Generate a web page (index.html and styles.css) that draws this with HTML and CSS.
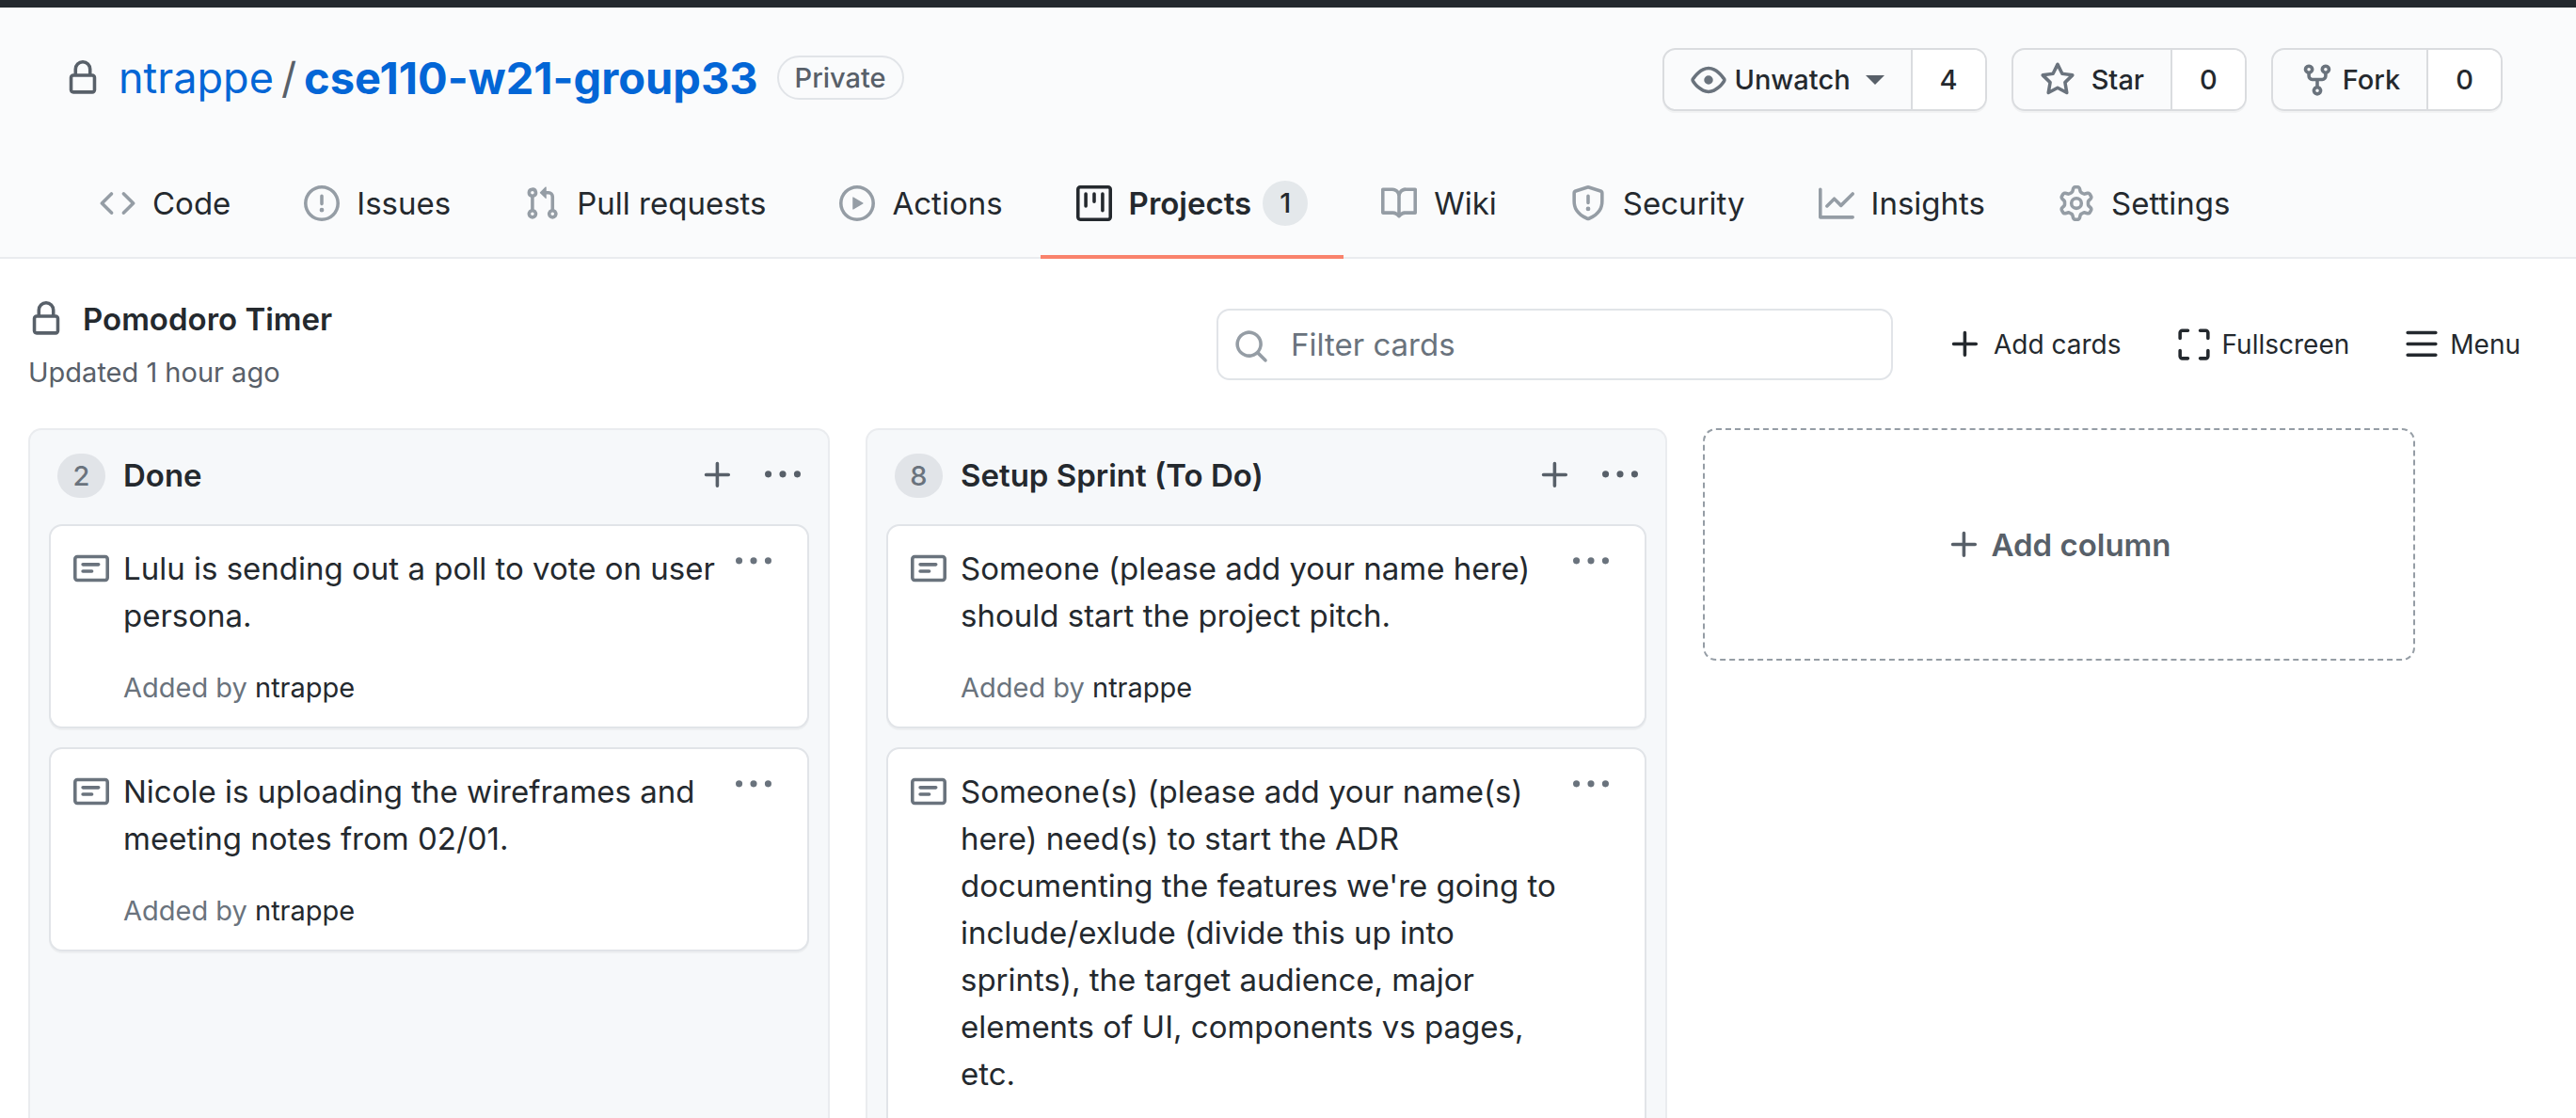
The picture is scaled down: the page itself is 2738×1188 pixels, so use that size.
FILE: index.html
```html
<!DOCTYPE html>
<html lang="en">
<head>
<meta charset="utf-8">
<meta name="viewport" content="width=device-width, initial-scale=1">
<title>Pomodoro Timer</title>
<link rel="stylesheet" href="styles.css">
</head>
<body>
<svg class="sprite" aria-hidden="true">
  <symbol id="lock" viewBox="0 0 16 16"><path d="M4 4v2h-.25A1.75 1.75 0 002 7.75v5.5c0 .966.784 1.75 1.75 1.75h8.5A1.75 1.75 0 0014 13.25v-5.5A1.75 1.75 0 0012.25 6H12V4a4 4 0 10-8 0zm6.5 2V4a2.5 2.5 0 10-5 0v2h5zM12 7.5h.25a.25.25 0 01.25.25v5.5a.25.25 0 01-.25.25h-8.5a.25.25 0 01-.25-.25v-5.5a.25.25 0 01.25-.25H12z"/></symbol>
  <symbol id="code" viewBox="0 0 16 16"><path d="M4.72 3.22a.75.75 0 011.06 1.06L2.06 8l3.72 3.72a.75.75 0 11-1.06 1.06L.47 8.53a.75.75 0 010-1.06l4.25-4.25zm6.56 0a.75.75 0 10-1.06 1.06L13.94 8l-3.72 3.72a.75.75 0 101.06 1.06l4.25-4.25a.75.75 0 000-1.06l-4.25-4.25z"/></symbol>
  <symbol id="issue" viewBox="0 0 16 16"><path d="M8 1.5a6.5 6.5 0 100 13 6.5 6.5 0 000-13zM0 8a8 8 0 1116 0A8 8 0 010 8zm9 3a1 1 0 11-2 0 1 1 0 012 0zm-.25-6.25a.75.75 0 00-1.5 0v3.5a.75.75 0 001.5 0v-3.5z"/></symbol>
  <symbol id="pull" viewBox="0 0 16 16"><path d="M7.177 3.073L9.573.677A.25.25 0 0110 .854v4.792a.25.25 0 01-.427.177L7.177 3.427a.25.25 0 010-.354zM3.75 2.5a.75.75 0 100 1.5.75.75 0 000-1.5zm-2.25.75a2.25 2.25 0 113 2.122v5.256a2.251 2.251 0 11-1.5 0V5.372A2.25 2.25 0 011.5 3.25zM11 2.5h-1V4h1a1 1 0 011 1v5.628a2.251 2.251 0 101.5 0V5A2.5 2.5 0 0011 2.5zm1 10.25a.75.75 0 111.5 0 .75.75 0 01-1.5 0zM3.75 12a.75.75 0 100 1.5.75.75 0 000-1.5z"/></symbol>
  <symbol id="play" viewBox="0 0 16 16"><path d="M1.5 8a6.5 6.5 0 1113 0 6.5 6.5 0 01-13 0zM8 0a8 8 0 100 16A8 8 0 008 0zM6.379 5.227A.25.25 0 006 5.442v5.117a.25.25 0 00.379.214l4.264-2.559a.25.25 0 000-.428L6.379 5.227z"/></symbol>
  <symbol id="project" viewBox="0 0 16 16"><path d="M1.75 0A1.75 1.75 0 000 1.75v12.5C0 15.216.784 16 1.75 16h12.5A1.75 1.75 0 0016 14.25V1.75A1.75 1.75 0 0014.25 0H1.75zM1.5 1.75a.25.25 0 01.25-.25h12.5a.25.25 0 01.25.25v12.5a.25.25 0 01-.25.25H1.75a.25.25 0 01-.25-.25V1.75zM11.75 3a.75.75 0 00-.75.75v7.5a.75.75 0 001.5 0v-7.5a.75.75 0 00-.75-.75zm-8.25.75a.75.75 0 011.5 0v5.5a.75.75 0 01-1.5 0v-5.5zM8 3a.75.75 0 00-.75.75v3.5a.75.75 0 001.5 0v-3.5A.75.75 0 008 3z"/></symbol>
  <symbol id="book" viewBox="0 0 16 16"><path d="M0 1.75A.75.75 0 01.75 1h4.253c1.227 0 2.317.59 3 1.501A3.744 3.744 0 0111.006 1h4.245a.75.75 0 01.75.75v10.5a.75.75 0 01-.75.75h-4.507a2.25 2.25 0 00-1.591.659l-.622.621a.75.75 0 01-1.06 0l-.622-.621A2.25 2.25 0 005.258 13H.75a.75.75 0 01-.75-.75V1.75zm8.755 3a2.25 2.25 0 012.25-2.25H14.5v9h-3.757c-.71 0-1.4.201-1.992.572l.004-7.322zm-1.504 7.324l.004-5.073-.002-2.253A2.25 2.25 0 005.003 2.5H1.5v9h3.757a3.75 3.75 0 011.994.574z"/></symbol>
  <symbol id="shield" viewBox="0 0 16 16"><path d="M7.467.133a1.75 1.75 0 011.066 0l5.25 1.68A1.75 1.75 0 0115 3.48V7c0 1.566-.32 3.182-1.303 4.682-.983 1.498-2.585 2.813-5.032 3.855a1.7 1.7 0 01-1.33 0c-2.447-1.042-4.049-2.357-5.032-3.855C1.32 10.182 1 8.566 1 7V3.48a1.75 1.75 0 011.217-1.667l5.25-1.68zm.61 1.429a.25.25 0 00-.153 0l-5.25 1.68a.25.25 0 00-.174.238V7c0 1.358.275 2.666 1.057 3.86.784 1.194 2.121 2.34 4.366 3.297a.2.2 0 00.154 0c2.245-.956 3.582-2.104 4.366-3.298C13.225 9.666 13.5 8.36 13.5 7V3.48a.25.25 0 00-.174-.237l-5.25-1.68zM9 10.5a1 1 0 11-2 0 1 1 0 012 0zm-.25-5.75a.75.75 0 10-1.5 0v3a.75.75 0 001.5 0v-3z"/></symbol>
  <symbol id="graph" viewBox="0 0 16 16"><path d="M1.5 1.75a.75.75 0 00-1.5 0v12.5c0 .414.336.75.75.75h14.5a.75.75 0 000-1.5H1.5V1.75zm14.28 2.53a.75.75 0 00-1.06-1.06L10 7.94 7.53 5.47a.75.75 0 00-1.06 0L3.22 8.72a.75.75 0 001.06 1.06L7 7.06l2.47 2.47a.75.75 0 001.06 0l5.25-5.25z"/></symbol>
  <symbol id="gear" viewBox="0 0 16 16"><path d="M7.429 1.525a6.593 6.593 0 011.142 0c.036.003.108.036.137.146l.289 1.105c.147.56.55.967.997 1.189.174.086.341.183.501.29.417.278.97.423 1.53.27l1.102-.303c.11-.03.175.016.195.046.219.31.41.641.573.989.014.031.022.11-.059.19l-.815.806c-.411.406-.562.957-.53 1.456a4.588 4.588 0 010 .582c-.032.499.119 1.05.53 1.456l.815.806c.08.08.073.159.059.19a6.494 6.494 0 01-.573.99c-.02.029-.086.074-.195.045l-1.103-.303c-.559-.153-1.112-.008-1.529.27-.16.107-.327.204-.5.29-.449.222-.851.628-.998 1.189l-.289 1.105c-.029.11-.101.143-.137.146a6.613 6.613 0 01-1.142 0c-.036-.003-.108-.037-.137-.146l-.289-1.105c-.147-.56-.55-.967-.997-1.189a4.502 4.502 0 01-.501-.29c-.417-.278-.97-.423-1.53-.27l-1.102.303c-.11.03-.175-.016-.195-.046a6.492 6.492 0 01-.573-.989c-.014-.031-.022-.11.059-.19l.815-.806c.411-.406.562-.957.53-1.456a4.587 4.587 0 010-.582c.032-.499-.119-1.05-.53-1.456l-.815-.806c-.08-.08-.073-.159-.059-.19a6.44 6.44 0 01.573-.99c.02-.029.086-.075.195-.045l1.103.303c.559.153 1.112.008 1.529-.27.16-.107.327-.204.5-.29.449-.222.851-.628.998-1.189l.289-1.105c.029-.11.101-.143.137-.146zM8 0c-.236 0-.47.01-.701.03-.743.065-1.29.615-1.458 1.261l-.29 1.106c-.017.066-.078.158-.211.224a5.994 5.994 0 00-.668.386c-.123.082-.233.09-.3.071L3.27 2.776c-.644-.177-1.392.02-1.82.63a7.977 7.977 0 00-.704 1.217c-.315.675-.111 1.422.363 1.891l.815.806c.05.048.098.147.088.294a6.084 6.084 0 000 .772c.01.147-.038.246-.088.294l-.815.806c-.474.469-.678 1.216-.363 1.891.2.428.436.835.704 1.218.428.609 1.176.806 1.82.63l1.103-.303c.066-.019.176-.011.299.071.213.143.436.272.668.386.133.066.194.158.212.224l.289 1.106c.169.646.715 1.196 1.458 1.26a8.094 8.094 0 001.402 0c.743-.064 1.29-.614 1.458-1.26l.29-1.106c.017-.066.078-.158.211-.224a5.98 5.98 0 00.668-.386c.123-.082.233-.09.3-.071l1.102.302c.644.177 1.392-.02 1.82-.63.268-.382.505-.789.704-1.217.315-.675.111-1.422-.364-1.891l-.814-.806c-.05-.048-.098-.147-.088-.294a6.1 6.1 0 000-.772c-.01-.147.039-.246.088-.294l.814-.806c.475-.469.679-1.216.364-1.891a7.992 7.992 0 00-.704-1.218c-.428-.609-1.176-.806-1.82-.63l-1.103.303c-.066.019-.176.011-.299-.071a5.991 5.991 0 00-.668-.386c-.133-.066-.194-.158-.212-.224L10.16 1.29C9.99.645 9.444.095 8.701.031A8.094 8.094 0 008 0zm1.5 8a1.5 1.5 0 11-3 0 1.5 1.5 0 013 0zM11 8a3 3 0 11-6 0 3 3 0 016 0z"/></symbol>
  <symbol id="eye" viewBox="0 0 16 16"><path d="M1.679 7.932c.412-.621 1.242-1.75 2.366-2.717C5.175 4.242 6.527 3.5 8 3.5c1.473 0 2.824.742 3.955 1.715 1.124.967 1.954 2.096 2.366 2.717a.119.119 0 010 .136c-.412.621-1.242 1.75-2.366 2.717C10.825 11.758 9.473 12.5 8 12.5c-1.473 0-2.824-.742-3.955-1.715C2.92 9.818 2.09 8.69 1.679 8.068a.119.119 0 010-.136zM8 2c-1.981 0-3.67.992-4.933 2.078C1.797 5.169.88 6.423.43 7.1a1.619 1.619 0 000 1.798c.45.678 1.367 1.932 2.637 3.024C4.329 13.008 6.019 14 8 14c1.981 0 3.67-.992 4.933-2.078 1.27-1.091 2.187-2.345 2.637-3.023a1.619 1.619 0 000-1.798c-.45-.678-1.367-1.932-2.637-3.023C11.671 2.992 9.981 2 8 2zm0 8a2 2 0 100-4 2 2 0 000 4z"/></symbol>
  <symbol id="star" viewBox="0 0 16 16"><path d="M8 .25a.75.75 0 01.673.418l1.882 3.815 4.21.612a.75.75 0 01.416 1.279l-3.046 2.97.719 4.192a.75.75 0 01-1.088.791L8 12.347l-3.766 1.98a.75.75 0 01-1.088-.79l.72-4.194L.818 6.374a.75.75 0 01.416-1.28l4.21-.611L7.327.668A.75.75 0 018 .25zm0 2.445L6.615 5.5a.75.75 0 01-.564.41l-3.097.45 2.24 2.184a.75.75 0 01.216.664l-.528 3.084 2.769-1.456a.75.75 0 01.698 0l2.77 1.456-.53-3.084a.75.75 0 01.216-.664l2.24-2.183-3.096-.45a.75.75 0 01-.564-.41L8 2.694v.001z"/></symbol>
  <symbol id="fork" viewBox="0 0 16 16"><path d="M5 3.25a.75.75 0 11-1.5 0 .75.75 0 011.5 0zm0 2.122a2.25 2.25 0 10-1.5 0v.878A2.25 2.25 0 005.75 8.5h1.5v2.128a2.251 2.251 0 101.5 0V8.5h1.5a2.25 2.25 0 002.25-2.25v-.878a2.25 2.25 0 10-1.5 0v.878a.75.75 0 01-.75.75h-4.5A.75.75 0 015 6.25v-.878zm3.75 7.378a.75.75 0 11-1.5 0 .75.75 0 011.5 0zm3-8.75a.75.75 0 100-1.5.75.75 0 000 1.5z"/></symbol>
  <symbol id="search" viewBox="0 0 16 16"><path d="M11.5 7a4.499 4.499 0 11-8.998 0A4.499 4.499 0 0111.5 7zm-.82 4.74a6 6 0 111.06-1.06l3.04 3.04a.75.75 0 11-1.06 1.06l-3.04-3.04z"/></symbol>
  <symbol id="plus" viewBox="0 0 16 16"><path d="M7.75 2a.75.75 0 01.75.75V7h4.25a.75.75 0 110 1.5H8.5v4.25a.75.75 0 11-1.5 0V8.5H2.75a.75.75 0 010-1.5H7V2.75A.75.75 0 017.75 2z"/></symbol>
  <symbol id="full" viewBox="0 0 16 16"><path d="M2.75 2.5a.25.25 0 00-.25.25v2.5a.75.75 0 01-1.5 0v-2.5C1 1.784 1.784 1 2.75 1h2.5a.75.75 0 010 1.5h-2.5zM10 1.75a.75.75 0 01.75-.75h2.5c.966 0 1.75.784 1.75 1.75v2.5a.75.75 0 01-1.5 0v-2.5a.25.25 0 00-.25-.25h-2.5a.75.75 0 01-.75-.75zM1.75 10a.75.75 0 01.75.75v2.5c0 .138.112.25.25.25h2.5a.75.75 0 010 1.5h-2.5A1.75 1.75 0 011 13.25v-2.5a.75.75 0 01.75-.75zm12.5 0a.75.75 0 01.75.75v2.5A1.75 1.75 0 0113.25 15h-2.5a.75.75 0 010-1.5h2.5a.25.25 0 00.25-.25v-2.5a.75.75 0 01.75-.75z"/></symbol>
  <symbol id="bars" viewBox="0 0 16 16"><path d="M1 2.75A.75.75 0 011.75 2h12.5a.75.75 0 110 1.5H1.75A.75.75 0 011 2.75zm0 5A.75.75 0 011.75 7h12.5a.75.75 0 110 1.5H1.75A.75.75 0 011 7.75zM1.75 12a.75.75 0 100 1.5h12.5a.75.75 0 100-1.5H1.75z"/></symbol>
  <symbol id="note" viewBox="0 0 16 16"><path d="M0 3.75C0 2.784.784 2 1.75 2h12.5c.966 0 1.75.784 1.75 1.75v8.5A1.75 1.75 0 0114.25 14H1.75A1.75 1.75 0 010 12.25v-8.5zm1.75-.25a.25.25 0 00-.25.25v8.5c0 .138.112.25.25.25h12.5a.25.25 0 00.25-.25v-8.5a.25.25 0 00-.25-.25H1.75zM3.5 6.25a.75.75 0 01.75-.75h7a.75.75 0 010 1.5h-7a.75.75 0 01-.75-.75zm.75 2.25a.75.75 0 000 1.5h4a.75.75 0 000-1.5h-4z"/></symbol>
  <symbol id="kebab" viewBox="0 0 16 16"><path d="M8 9a1.5 1.5 0 100-3 1.5 1.5 0 000 3zM1.5 9a1.5 1.5 0 100-3 1.5 1.5 0 000 3zm13 0a1.5 1.5 0 100-3 1.5 1.5 0 000 3z"/></symbol>
</svg>

<header class="repo-header">
  <div class="repo-top">
    <h1 class="repo-title">
      <svg class="icon"><use href="#lock"/></svg>
      <a class="owner" href="#owner">ntrappe</a>
      <span class="slash">/</span>
      <a class="repo" href="#repo">cse110-w21-group33</a>
      <span class="label">Private</span>
    </h1>
    <div class="actions">
      <div class="split">
        <button class="split-main gap-s" type="button"><svg class="icon"><use href="#eye"/></svg>Unwatch<span class="caret"></span></button>
        <a class="split-count" href="#watchers">4</a>
      </div>
      <div class="split">
        <button class="split-main gap-l" type="button"><svg class="icon"><use href="#star"/></svg>Star</button>
        <a class="split-count" href="#stars">0</a>
      </div>
      <div class="split">
        <button class="split-main gap-s" type="button"><svg class="icon"><use href="#fork"/></svg>Fork</button>
        <a class="split-count" href="#forks">0</a>
      </div>
    </div>
  </div>
  <nav class="tabs" aria-label="Repository">
    <a class="tab" href="#code-tab"><svg class="icon"><use href="#code"/></svg>Code</a>
    <a class="tab" href="#issues-tab"><svg class="icon"><use href="#issue"/></svg>Issues</a>
    <a class="tab" href="#pulls-tab"><svg class="icon"><use href="#pull"/></svg>Pull requests</a>
    <a class="tab" href="#actions-tab"><svg class="icon"><use href="#play"/></svg>Actions</a>
    <a class="tab tab-active" href="#projects-tab" aria-current="page"><svg class="icon"><use href="#project"/></svg>Projects<span class="tab-count">1</span></a>
    <a class="tab" href="#wiki-tab"><svg class="icon"><use href="#book"/></svg>Wiki</a>
    <a class="tab" href="#security-tab"><svg class="icon"><use href="#shield"/></svg>Security</a>
    <a class="tab" href="#insights-tab"><svg class="icon"><use href="#graph"/></svg>Insights</a>
    <a class="tab" href="#settings-tab"><svg class="icon"><use href="#gear"/></svg>Settings</a>
  </nav>
</header>

<main class="project">
  <div class="project-head">
    <div class="project-info">
      <h2 class="project-title"><svg class="icon"><use href="#lock"/></svg>Pomodoro Timer</h2>
      <p class="updated">Updated 1 hour ago</p>
    </div>
    <label class="filter">
      <svg class="icon"><use href="#search"/></svg>
      <input class="filter-input" type="text" placeholder="Filter cards" aria-label="Filter cards">
    </label>
    <div class="tools">
      <button class="tool" type="button"><svg class="icon"><use href="#plus"/></svg>Add cards</button>
      <button class="tool" type="button"><svg class="icon"><use href="#full"/></svg>Fullscreen</button>
      <button class="tool" type="button"><svg class="icon"><use href="#bars"/></svg>Menu</button>
    </div>
  </div>

  <div class="board">
    <section class="column">
      <div class="column-head">
        <span class="column-count">2</span>
        <h3 class="column-title">Done</h3>
        <button class="icon-button" type="button" aria-label="Add a note"><svg class="icon"><use href="#plus"/></svg></button>
        <button class="icon-button" type="button" aria-label="Column menu"><svg class="icon"><use href="#kebab"/></svg></button>
      </div>
      <article class="card">
        <svg class="icon card-icon"><use href="#note"/></svg>
        <div class="card-body">
          <p class="card-text">Lulu is sending out a poll to vote on user persona.</p>
          <p class="card-meta">Added by <a href="#owner">ntrappe</a></p>
        </div>
        <button class="icon-button" type="button" aria-label="Card menu"><svg class="icon"><use href="#kebab"/></svg></button>
      </article>
      <article class="card">
        <svg class="icon card-icon"><use href="#note"/></svg>
        <div class="card-body">
          <p class="card-text">Nicole is uploading the wireframes and meeting notes from 02/01.</p>
          <p class="card-meta">Added by <a href="#owner">ntrappe</a></p>
        </div>
        <button class="icon-button" type="button" aria-label="Card menu"><svg class="icon"><use href="#kebab"/></svg></button>
      </article>
    </section>

    <section class="column">
      <div class="column-head">
        <span class="column-count">8</span>
        <h3 class="column-title">Setup Sprint (To Do)</h3>
        <button class="icon-button" type="button" aria-label="Add a note"><svg class="icon"><use href="#plus"/></svg></button>
        <button class="icon-button" type="button" aria-label="Column menu"><svg class="icon"><use href="#kebab"/></svg></button>
      </div>
      <article class="card">
        <svg class="icon card-icon"><use href="#note"/></svg>
        <div class="card-body">
          <p class="card-text">Someone (please add your name here) should start the project pitch.</p>
          <p class="card-meta">Added by <a href="#owner">ntrappe</a></p>
        </div>
        <button class="icon-button" type="button" aria-label="Card menu"><svg class="icon"><use href="#kebab"/></svg></button>
      </article>
      <article class="card">
        <svg class="icon card-icon"><use href="#note"/></svg>
        <div class="card-body">
          <p class="card-text">Someone(s) (please add your name(s) here) need(s) to start the ADR documenting the features we're going to include/exlude (divide this up into sprints), the target audience, major elements of UI, components vs pages, etc.</p>
        </div>
        <button class="icon-button" type="button" aria-label="Card menu"><svg class="icon"><use href="#kebab"/></svg></button>
      </article>
    </section>

    <button class="add-column" type="button"><svg class="icon"><use href="#plus"/></svg>Add column</button>
  </div>
</main>
</body>
</html>
```
FILE: styles.css
```css
* { box-sizing: border-box; }

body {
  margin: 0;
  height: 100vh;
  display: flex;
  flex-direction: column;
  overflow: hidden;
  background: #fff;
  color: #24292e;
  font-family: Inter, "Liberation Sans", sans-serif;
  font-size: 33px;
  line-height: 50px;
}

h1, h2, h3, p { margin: 0; font-size: inherit; }
a { color: inherit; text-decoration: none; }
button { font: inherit; color: inherit; background: none; border: 0; padding: 0; cursor: pointer; }

.sprite { position: absolute; width: 0; height: 0; }
.icon { display: block; flex: none; width: 38px; height: 38px; fill: currentColor; fill-rule: evenodd; }

/* Repository header */
.repo-header {
  flex: none;
  padding-top: 43px;
  border-top: 8px solid #24292e;
  background: #fafbfc;
  box-shadow: inset 0 -2px #eaecef;
}
.repo-top { display: flex; justify-content: space-between; align-items: flex-start; padding: 0 78px 0 69px; }
.repo-title { display: flex; align-items: center; height: 63px; font-size: 45px; font-weight: 400; color: #586069; }
.owner { margin-left: 19px; color: #0366d6; }
.slash { margin: 0 8px; }
.repo { color: #0366d6; font-size: 47px; font-weight: 700; }
.label {
  margin-left: 20px;
  padding: 0 17px;
  border: 2px solid #e1e4e8;
  border-radius: 24px;
  font-size: 29px;
  line-height: 43px;
  font-weight: 500;
}

.actions { display: flex; gap: 26px; }
.split {
  display: flex;
  height: 67px;
  border: 2px solid #dadcdf;
  border-radius: 14px;
  overflow: hidden;
  box-shadow: 0 2px 0 rgba(27, 31, 35, .04);
  font-size: 29px;
  font-weight: 500;
}
.split-main { display: flex; align-items: center; padding: 0 28px; }
.split-main .icon { color: #6a737d; }
.gap-s { gap: 8px; }
.gap-l { gap: 17px; }
.caret { margin-left: 8px; border: 10px solid transparent; border-top-color: #586069; border-bottom: 0; }
.split-count { display: flex; align-items: center; padding: 0 29px; border-left: 2px solid #dadcdf; background: #fff; }

.tabs { display: flex; gap: 2px; margin-top: 42px; padding-left: 68px; }
.tab { display: flex; align-items: center; gap: 18px; height: 115px; padding: 0 38px 4px; white-space: nowrap; }
.tab .icon { color: #959da5; }
.tab-active { padding-bottom: 0; border-bottom: 4px solid #f9826c; font-weight: 600; }
.tab-active .icon { color: #24292e; }
.tab-count {
  min-width: 48px;
  margin-left: -6px;
  border-radius: 24px;
  background: #e4e8eb;
  font-size: 29px;
  line-height: 48px;
  font-weight: 500;
  text-align: center;
}

/* Project toolbar */
.project { flex: 1; min-height: 0; display: flex; flex-direction: column; padding: 39px 30px 0; }
.project-head { flex: none; display: flex; align-items: center; margin-bottom: 37px; }
.project-info { flex: 1; }
.project-title { display: flex; align-items: center; gap: 20px; font-weight: 600; }
.project-title .icon { color: #586069; }
.updated { margin-top: 10px; font-size: 29px; line-height: 44px; color: #586069; }
.filter {
  display: flex;
  align-items: center;
  gap: 23px;
  width: 719px;
  height: 76px;
  margin-right: 29px;
  padding: 4px 16px 0;
  border: 2px solid #e1e4e8;
  border-radius: 14px;
  color: #959da5;
}
.filter-input { flex: 1; min-width: 0; height: 60px; margin-bottom: 4px; padding: 0; border: 0; outline: 0; background: none; font: inherit; color: #24292e; }
.filter-input::placeholder { color: #6a737d; opacity: 1; }
.tools { display: flex; font-size: 28px; }
.tool { display: flex; align-items: center; gap: 11px; padding: 0 29px; }

/* Board */
.board { flex: 1; min-height: 0; display: flex; align-items: stretch; gap: 38px; }
.column {
  flex: none;
  width: 852px;
  height: 100%;
  overflow: hidden;
  padding: 0 20px;
  border: 2px solid #eaecef;
  border-bottom: 0;
  border-radius: 14px 14px 0 0;
  background: #f6f8fa;
}
.column-head { display: flex; align-items: center; height: 100px; padding: 0 9px 4px; }
.column-count {
  width: 51px;
  border-radius: 24px;
  background: #e1e4e8;
  color: #6a737d;
  font-size: 29px;
  line-height: 47px;
  font-weight: 500;
  text-align: center;
}
.column-title { flex: 1; margin-left: 19px; font-weight: 600; }
.icon-button { flex: none; height: 38px; color: #586069; }
.column-head .icon-button { margin-left: 31px; }

.card {
  display: flex;
  align-items: flex-start;
  margin-bottom: 20px;
  padding: 20px 38px 20px 24px;
  border: 2px solid #e1e4e8;
  border-radius: 14px;
  background: #fff;
  box-shadow: 0 2px 0 rgba(27, 31, 35, .04);
}
.card .icon { color: #6a737d; }
.card .icon-button { margin-top: -1px; }
.card-icon { margin-top: 6px; }
.card-body { flex: 1; min-width: 0; margin: 0 8px 0 15px; }
.card-text { margin-bottom: 30px; }
.card-meta { font-size: 29px; line-height: 43px; color: #6a737d; }
.card-meta a { color: #24292e; }

.add-column {
  flex: none;
  display: flex;
  align-items: center;
  justify-content: center;
  gap: 9px;
  width: 757px;
  height: 247px;
  border: 2px dashed #959da5;
  border-radius: 14px;
  color: #586069;
  font-weight: 600;
}
```
